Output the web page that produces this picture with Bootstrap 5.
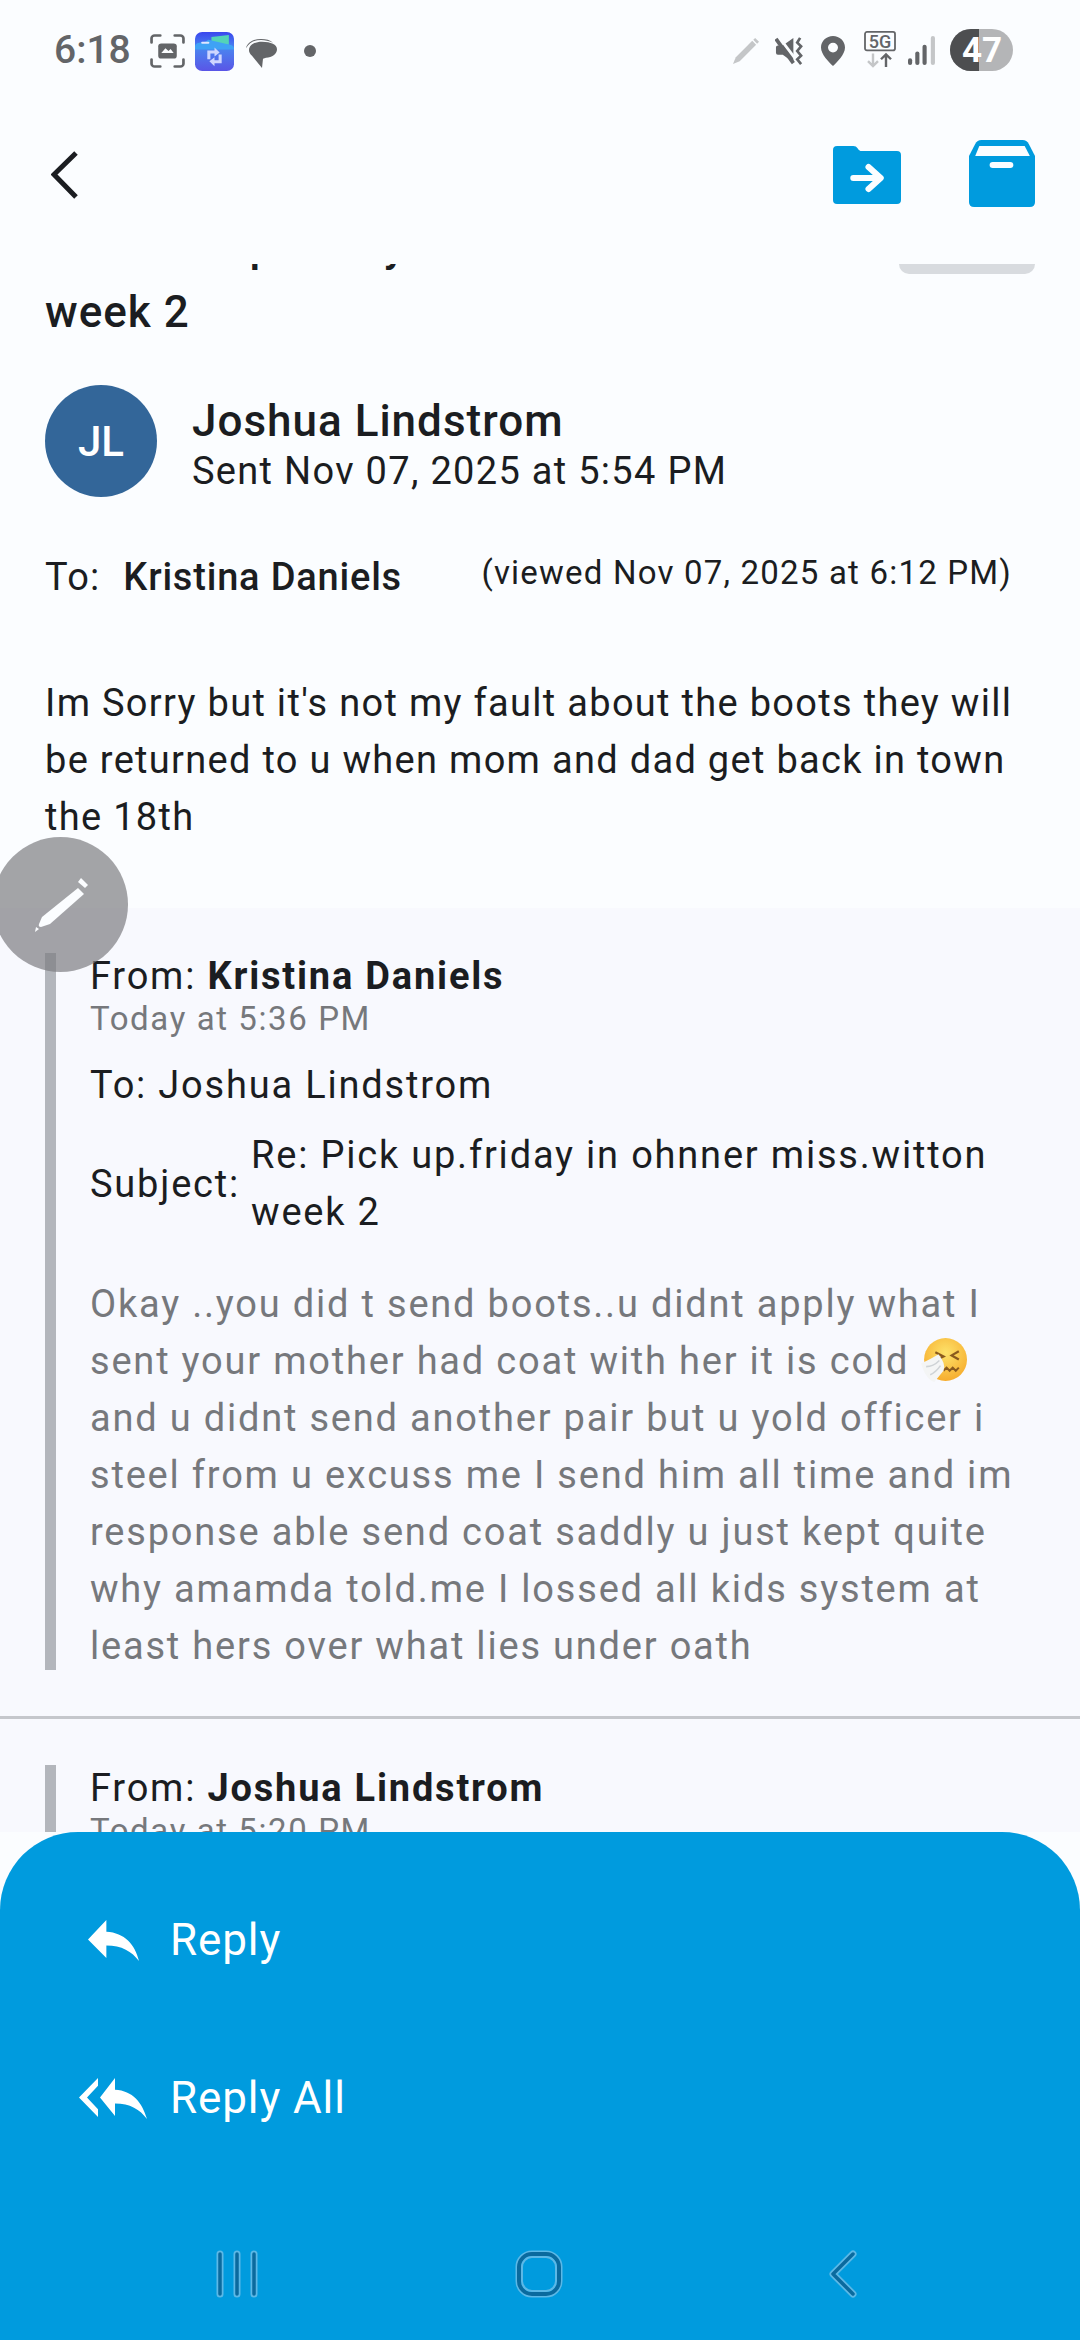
<!DOCTYPE html>
<html lang="en">
<head>
  <meta charset="UTF-8">
  <meta name="viewport" content="width=device-width, initial-scale=1.0">
  <title>Message</title>
  <link href="https://cdn.jsdelivr.net/npm/bootstrap@5.3.0/dist/css/bootstrap.min.css" rel="stylesheet">
  <style>
    html, body { margin: 0; height: 2340px; overflow: hidden; }
    body { font-family: Roboto, "Liberation Sans", sans-serif; color: #1b1d21; background: #fbfdff; letter-spacing: 1.3px; }
    .phone { width: 1080px; height: 2340px; position: relative; overflow: hidden; }
    svg { display: block; flex: none; }

    /* status bar */
    .status-row { height: 100px; padding: 28px 67px 0 54px; align-items: flex-start; color: #636568; flex: none; }
    .clock { font-size: 39px; line-height: 44px; font-weight: 500; width: 86px; letter-spacing: 0; }
    .st-left { gap: 10px; }
    .st-right { gap: 12px; }
    .i-shot { margin-top: 6px; }
    .i-app { margin-top: 4px; }
    .i-chat { margin: 10px 0 0 2px; }
    .i-dot { margin: 17px 0 0 17px; }
    .i-pen { margin-top: 8px; }
    .i-mute { margin: 9px 0 0 3px; }
    .i-loc { margin: 8px 0 0 5px; }
    .i-5g { margin: 3px 0 0 7px; }
    .i-sig { margin-top: 8px; }
    .i-batt { margin: 1px 0 0 2px; }

    /* app bar */
    .app-bar { height: 164px; padding: 40px 45px 0 51px; align-items: flex-start; flex: none; }
    .bar-actions { gap: 68px; align-items: flex-start; }
    .i-back { margin-top: 11px; }
    .i-folder { margin-top: 6px; }

    /* scrolled content */
    .scroll-area { flex: 1 1 0; min-height: 0; overflow: hidden; position: relative; }
    .pill-clip { position: absolute; right: 45px; top: 0; width: 136px; height: 10px; background: #d8dbdf; border-radius: 0 0 12px 12px; }
    .msg-title { margin: -51px 100px 0 45px; font-size: 44px; line-height: 66px; font-weight: 500; letter-spacing: 1px; }
    .sender { padding: 0 45px; margin-top: 40px; gap: 35px; }
    .avatar { width: 112px; height: 112px; border-radius: 50%; background: #336699; color: #fff; font-size: 42px; font-weight: 500; letter-spacing: 0; flex: none; }
    .sender-info { padding-top: 9px; }
    .sender-name { font-size: 44px; line-height: 50px; font-weight: 500; letter-spacing: 1px; }
    .sender-date { font-size: 38px; line-height: 50px; }
    .to-row { padding: 0 68px 0 45px; margin-top: 55px; font-size: 38px; line-height: 50px; }
    .to-name { font-weight: 500; margin-left: 12px; letter-spacing: .8px; }
    .viewed { font-size: 33px; margin-top: -4px; letter-spacing: 1.2px; }
    .body-text { font-size: 38px; line-height: 57px; padding: 0 45px; margin: 73px 0 0; }

    .quoted { background: #f8f9fe; margin-top: 62px; letter-spacing: 1.8px; }
    .quote-block { display: flow-root; margin-left: 45px; border-left: 11px solid #b3b6bc; padding-left: 34px; padding-right: 45px; }
    .first-quote { margin-top: 41px; }
    .from-line { font-size: 38px; line-height: 46px; }
    .from-line b { font-weight: 700; }
    .when { font-size: 33px; line-height: 40px; color: #76787c; letter-spacing: 1.6px; }
    .plain-line { font-size: 38px; line-height: 50px; margin-top: 21px; }
    .subject-row { font-size: 38px; line-height: 57px; margin-top: 17px; gap: 11px; }
    .subject-label { flex: none; }
    .grey-text { font-size: 38px; line-height: 57px; color: #76787c; margin: 35px 0 -5px; }
    .sneeze { display: inline-block; vertical-align: -10px; }
    .quote-sep { height: 3px; background: #c5c7cc; margin-top: 46px; }
    .second-quote { margin-top: 46px; min-height: 200px; }

    .edit-fab { position: absolute; left: -7px; top: 573px; width: 135px; height: 135px; border-radius: 50%; background: rgba(125, 126, 130, .7); }

    /* bottom sheet */
    .reply-sheet { height: 508px; flex: none; background: #009bde; border-radius: 78px 78px 0 0; color: #fff; }
    .reply-list { padding-top: 29px; }
    .reply-item { height: 158px; font-size: 44px; letter-spacing: .9px; }
    .reply-slot { width: 170px; flex: none; }
    .i-reply { margin-left: 88px; }
    .i-replyall { margin-left: 79px; }
    .nav-keys { height: 90px; margin-top: auto; }
    .key-recent { margin-left: 215px; }
    .key-home { margin-left: 256px; }
    .key-back { margin-left: 264px; }
  </style>
</head>
<body>
  <div class="phone d-flex flex-column">

    <!-- status bar -->
    <div class="status-row d-flex justify-content-between">
      <div class="d-flex st-left align-items-start">
        <span class="clock">6:18</span>
        <svg class="i-shot" width="35" height="34" viewBox="0 0 34 36" preserveAspectRatio="none" fill="none" stroke="#636568" stroke-width="2.6" stroke-linecap="round"><path d="M1.500 9V4.500a3 3 0 0 1 3-3H10M24 1.500h5.500a3 3 0 0 1 3 3V9M32.500 27v4.500a3 3 0 0 1-3 3H24M10 34.500H4.500a3 3 0 0 1-3-3V27"/><rect x="8" y="10" width="18" height="16" rx="3" fill="#636568" stroke="none"/><path d="M11 20l4-5 3 3 2-2 3 4z" fill="#fbfdff" stroke="none"/></svg>
        <svg class="i-app" width="39" height="39" viewBox="0 0 38 40" preserveAspectRatio="none">
          <defs><linearGradient id="appg" x1="0" y1="0" x2="0" y2="1"><stop offset="0" stop-color="#3a46ee"/><stop offset=".4" stop-color="#4a86f0"/><stop offset="1" stop-color="#5a55e6"/></linearGradient></defs>
          <rect width="38" height="40" rx="7" fill="url(#appg)"/>
          <path d="M16 5l17-2v10H16z" fill="#53d3b8"/>
          <path d="M0 15q0-3 4-4l6-1 3-2 21 5q4 1 4 4v1H0z" fill="#3fa2f5"/>
          <rect x="6" y="10" width="8" height="2" rx="1" fill="#dfe6ff"/>
          <path d="M12 22v-3h7v-3l5 5-5 4v-3h-4v6h-3zM26 29v3h-7v3l-5-5 5-4v3h4v-6h3z" fill="#cfd6ff"/>
        </svg>
        <svg class="i-chat" width="31" height="30" viewBox="0 0 31 32" preserveAspectRatio="none"><path d="M0 11C1 5 7 1 15 1c5 0 9 1 12 4-4-2-8-3-12-3C8 2 3 5 0 11z" fill="#636568"/><path d="M16 4c9 0 15 3 15 8 0 5-5 9-11 9l-3 1-1 10-10-13c-2-2-3-4-3-6 0-5 5-9 13-9z" fill="#636568"/></svg>
        <svg class="i-dot" width="12" height="12" viewBox="0 0 12 12"><circle cx="6" cy="6" r="6" fill="#636568"/></svg>
      </div>
      <div class="d-flex st-right align-items-start">
        <svg class="i-pen" width="29" height="30" viewBox="0 0 30 31" preserveAspectRatio="none"><path d="M22 5l4 4-17 17-7 3 3-7z" fill="#c4c6c8"/><path d="M25 2l4 4-2 2-4-4z" fill="#c4c6c8"/></svg>
        <svg class="i-mute" width="29" height="28" viewBox="0 0 30 30" preserveAspectRatio="none"><path d="M1 11q0-2 2-2h5l11-8v26l-11-8H3q-2 0-2-2z" fill="#636568"/><path d="M4 0l19 26" stroke="#fbfdff" stroke-width="3"/><path d="M1 2l18 26" stroke="#636568" stroke-width="3.800"/><path d="M26 1l-3 5 4 4-4 5 4 5-4 4 4 5" stroke="#636568" stroke-width="2.800" fill="none"/></svg>
        <svg class="i-loc" width="24" height="30" viewBox="0 0 24 31" preserveAspectRatio="none"><path fill-rule="evenodd" d="M12 0c6.600 0 12 5.200 12 11.800C24 19 16 27 12 31 8 27 0 19 0 11.800 0 5.200 5.400 0 12 0zm0 7a5 5 0 1 0 0 10 5 5 0 0 0 0-10z" fill="#636568"/></svg>
        <svg class="i-5g" width="32" height="37" viewBox="0 0 32 38" preserveAspectRatio="none"><rect x="1" y="1" width="30" height="19" rx="2" fill="none" stroke="#636568" stroke-width="1.800"/><text x="16" y="17" text-anchor="middle" font-family="Roboto, sans-serif" font-size="18" font-weight="500" fill="#636568" letter-spacing="0">5G</text><path d="M9 23v13M4 31l5 5 5-5" stroke="#c4c6c8" stroke-width="2.400" fill="none"/><path d="M22 37V24M17 29l5-5 5 5" stroke="#636568" stroke-width="2.400" fill="none"/></svg>
        <svg class="i-sig" width="28" height="29" viewBox="0 0 27 30" preserveAspectRatio="none"><rect x="0" y="23" width="4" height="7" rx="2" fill="#636568"/><rect x="7" y="16" width="4" height="14" rx="2" fill="#636568"/><rect x="14" y="9" width="4" height="21" rx="2" fill="#636568"/><rect x="22" y="0" width="4" height="30" rx="2" fill="#c4c6c8"/></svg>
        <svg class="i-batt" width="63" height="42" viewBox="0 0 63 42"><rect width="63" height="42" rx="21" fill="#b4b5b7"/><path d="M29 0H21a21 21 0 0 0 0 42h8z" fill="#4d4e50"/><text x="32" y="33" text-anchor="middle" font-family="Roboto, sans-serif" font-size="35" font-weight="700" fill="#fff" letter-spacing="0">47</text></svg>
      </div>
    </div>

    <!-- app bar -->
    <div class="app-bar d-flex justify-content-between">
      <svg class="i-back" width="28" height="48" viewBox="0 0 28 48" fill="none" stroke="#1b1d21" stroke-width="5"><path d="M25 2L3 23.500 25 46"/></svg>
      <div class="d-flex bar-actions">
        <svg class="i-folder" width="68" height="58" viewBox="0 0 67 58" preserveAspectRatio="none"><path d="M4 0h16q3 0 4 2t3 3h36q4 0 4 4v45q0 4-4 4H4q-4 0-4-4V4q0-4 4-4z" fill="#009bde"/><path d="M20 32h26M35 21l12 11-12 11" fill="none" stroke="#fbfdff" stroke-width="6" stroke-linecap="round" stroke-linejoin="round"/></svg>
        <svg width="66" height="67" viewBox="0 0 64 67" preserveAspectRatio="none"><path d="M12 0h40q4 0 6 4l6 12v46q0 5-5 5H5q-5 0-5-5V16l6-12q2-4 6-4z" fill="#009bde"/><path d="M10 6h44l5 10H6z" fill="#fbfdff"/><rect x="20" y="22" width="23" height="6" rx="3" fill="#fbfdff"/></svg>
      </div>
    </div>

    <!-- message -->
    <div class="scroll-area">
      <div class="pill-clip"></div>
      <div class="msg-title">Re: Pick up.friday in ohnner miss.witton week 2</div>

      <div class="sender d-flex align-items-center">
        <div class="avatar d-flex align-items-center justify-content-center">JL</div>
        <div class="sender-info">
          <div class="sender-name">Joshua Lindstrom</div>
          <div class="sender-date">Sent Nov 07, 2025 at 5:54 PM</div>
        </div>
      </div>

      <div class="to-row d-flex justify-content-between">
        <div>To: <span class="to-name">Kristina Daniels</span></div>
        <div class="viewed">(viewed Nov 07, 2025 at 6:12 PM)</div>
      </div>

      <p class="body-text">Im Sorry but it's not my fault about the boots they will be returned to u when mom and dad get back in town the 18th</p>

      <div class="quoted pt-1">
        <div class="quote-block first-quote">
          <div class="from-line">From: <b>Kristina Daniels</b></div>
          <div class="when">Today at 5:36 PM</div>
          <div class="plain-line">To: Joshua Lindstrom</div>
          <div class="subject-row d-flex align-items-center">
            <span class="subject-label">Subject:</span>
            <span>Re: Pick up.friday in ohnner miss.witton week 2</span>
          </div>
          <p class="grey-text">Okay ..you did t send boots..u didnt apply what I sent your mother had coat with her it is cold
            <svg class="sneeze" width="47" height="47" viewBox="0 0 46 46"><defs><radialGradient id="emo" cx=".5" cy=".35" r=".7"><stop offset="0" stop-color="#fde26a"/><stop offset="1" stop-color="#f6a92a"/></radialGradient></defs><circle cx="25" cy="22" r="21" fill="url(#emo)"/><path d="M15 15l8 4-8 4M38 14l-7 4 7 4" fill="none" stroke="#8a5a1e" stroke-width="2.200"/><path d="M23 33l3-3 3 3 3-3 3 3 3-3" fill="none" stroke="#8a5a1e" stroke-width="2"/><path d="M1 26q11-5 17-9 8 10 5 16l-9 11q-8-2-13-18z" fill="#f4f5f5"/><path d="M6 29q7 0 13-6M10 37q6-3 10-9" stroke="#cfd3d6" stroke-width="1.500" fill="none"/></svg>
            and u didnt send another pair but u yold officer i steel from u excuss me I send him all time and im response able send coat saddly u just kept quite why amamda told.me I lossed all kids system at least hers over what lies under oath</p>
        </div>
        <div class="quote-sep"></div>
        <div class="quote-block second-quote">
          <div class="from-line">From: <b>Joshua Lindstrom</b></div>
          <div class="when">Today at 5:20 PM</div>
        </div>
      </div>

      <div class="edit-fab d-flex align-items-center justify-content-center">
        <svg width="60" height="60" viewBox="0 0 60 60"><path d="M47 13L53 19 19 49l-9 3q-3 0-2-3l3-7z" fill="#fbfdff"/><path d="M50 3l7 7-3 3-7-6z" fill="#fbfdff"/><path d="M5 52l3 2-4 3z" fill="#fbfdff"/></svg>
      </div>
    </div>

    <!-- reply sheet -->
    <div class="reply-sheet d-flex flex-column">
      <div class="reply-list">
        <div class="reply-item d-flex align-items-center">
          <div class="reply-slot"><svg class="i-reply" width="51" height="41" viewBox="0 0 50 42" preserveAspectRatio="none"><path d="M18 0v12c18 1 28 13 32 30-7-10-17-16-32-16v13L0 20z" fill="#fff"/></svg></div>
          Reply
        </div>
        <div class="reply-item d-flex align-items-center">
          <div class="reply-slot"><svg class="i-replyall" width="68" height="41" viewBox="0 0 68 42" preserveAspectRatio="none"><path d="M19 0v8L8 20l11 12v8L0 20z" fill="#fff"/><path d="M36 0v12c18 1 27 13 32 30-7-10-17-16-32-16v13L21 20z" fill="#fff"/></svg></div>
          Reply All
        </div>
      </div>
      <div class="nav-keys d-flex align-items-start">
        <svg class="key-recent" width="44" height="48" viewBox="0 0 44 48" fill="none" stroke-linecap="round"><g stroke="#5cb8e6" stroke-width="7"><path d="M5 4v40M22 4v40M39 4v40"/></g><g stroke="#0a6a9e" stroke-width="3.500"><path d="M5 4v40M22 4v40M39 4v40"/></g></svg>
        <svg class="key-home" width="48" height="48" viewBox="0 0 48 48" fill="none"><rect x="2" y="2" width="44" height="44" rx="15" stroke="#5cb8e6" stroke-width="3"/><rect x="4" y="4" width="40" height="40" rx="13" stroke="#0a6a9e" stroke-width="4"/><rect x="7" y="7" width="34" height="34" rx="10" stroke="#5cb8e6" stroke-width="2"/></svg>
        <svg class="key-back" width="30" height="48" viewBox="0 0 30 48" fill="none" stroke-linecap="round" stroke-linejoin="round"><path d="M26 4L6 24l20 20" stroke="#5cb8e6" stroke-width="7"/><path d="M26 4L6 24l20 20" stroke="#0a6a9e" stroke-width="3.500"/></svg>
      </div>
    </div>
  </div>
</body>
</html>
